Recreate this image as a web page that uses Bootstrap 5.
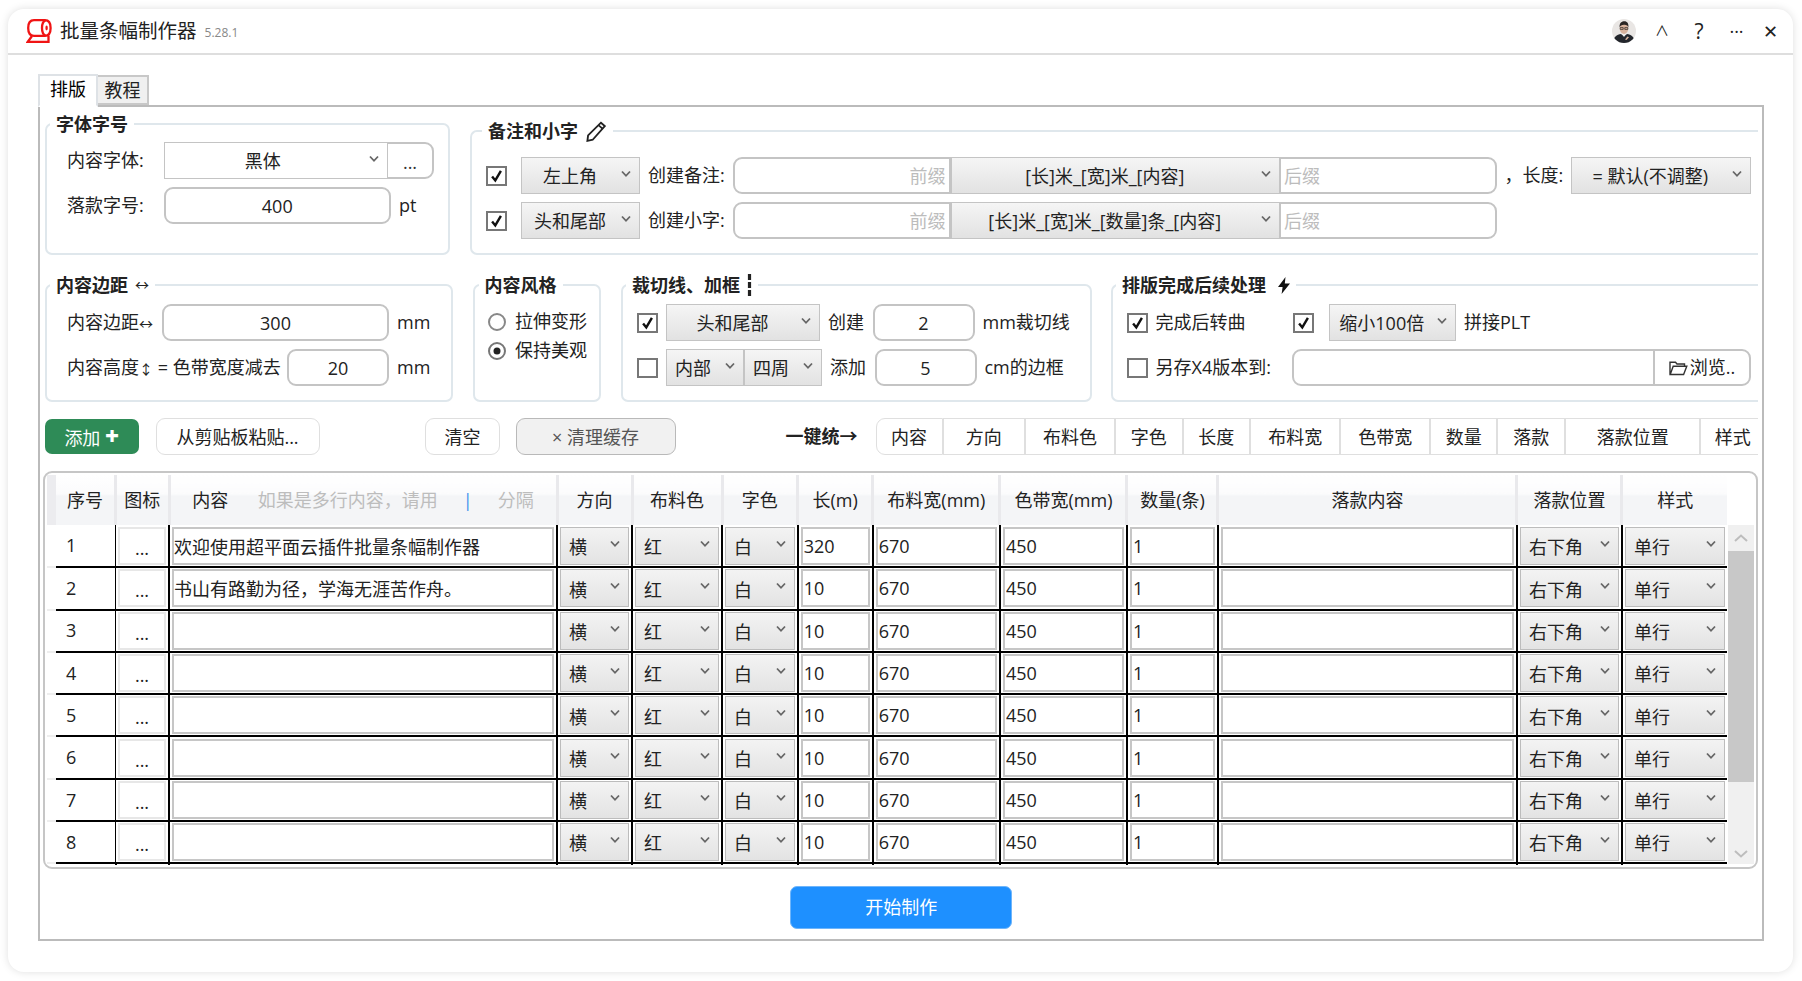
<!DOCTYPE html>
<html lang="zh-CN">
<head>
<meta charset="utf-8">
<title>批量条幅制作器</title>
<link href="https://cdn.jsdelivr.net/npm/bootstrap@5.3.0/dist/css/bootstrap.min.css" rel="stylesheet">
<style>
:root{--chev:url("data:image/svg+xml,%3Csvg xmlns='http://www.w3.org/2000/svg' viewBox='0 0 10 8'%3E%3Cpath d='M1 1.5 5 5.8 9 1.5' fill='none' stroke='%23666' stroke-width='1.8'/%3E%3C/svg%3E");}
html,body{height:100%;}
body{background:#fff;color:#222;font-family:"Open Sans","Noto Sans CJK SC",sans-serif;font-size:18px;line-height:1.25;overflow:hidden;}
.win{margin:9px 9px 9px 8px;height:963px;background:#fff;border-radius:16px;box-shadow:0 0 9px rgba(0,0,0,.13);}
.tbar{height:46px;border-bottom:2px solid #dedede;padding:0 6px 0 18px;}
.ttl{font-size:19.5px;margin-left:8px;}
.ver{font-size:12px;color:#888;margin-left:8px;padding-top:2px;}
.tico{width:26px;height:24px;flex:none;}
.avatar{width:24px;height:24px;flex:none;margin-right:10px;}
.tact span{text-align:center;}
.tb-up{width:32px;font-size:14px;}
.tb-q{width:42px;font-size:21px;}
.tb-m{width:33px;}
.tb-x{width:34px;}
.body-wrap{padding:19px 29px 0 30px;}
.tabs{border:0;margin:0;align-items:flex-end;position:relative;z-index:2;}
.tabs .nav-link{color:#222;font-size:18px;line-height:27px;padding:0;white-space:nowrap;border:2px solid #bbb;border-radius:0;background:#fff;height:33px;margin:0 0 -2px;width:60px;text-align:center;}
.tabs .nav-item+.nav-item .nav-link{background:#f0f0f0;width:51px;height:30px;margin:0;border-left:0;border-color:#c8c8c8;line-height:26px;}
.panel{border:2px solid #bbb;height:836px;padding:3px 4px 0 5px;background:#fff;}
.grp{border:2px solid #dfe7ec;border-radius:7px;padding:0;margin:0;min-width:0;}
.grp legend{float:none;width:auto;font-size:18px;font-weight:700;line-height:28px;margin:0;padding:0 6px;display:flex;align-items:center;gap:7px;}
.opn{border-right:0;border-top-right-radius:0;border-bottom-right-radius:0;}
.g1{width:405px;height:144.5px;padding:4px 0 0 20px;}
.g1 legend{margin-left:-17px;}
.g2{width:1288.5px;height:137.5px;margin:7px 0 0 19.5px;padding:12px 0 0 14px;}
.g2 legend{margin-left:-3.5px;}
.row2{margin-top:16.5px;}
.g3,.g4,.g5,.g6{height:131px;}
.g3{width:408px;padding:5px 0 0 20px;}
.g3 legend{margin-left:-17px;}
.g4{width:128.5px;margin-left:19.5px;padding:8px 0 0 13.5px;}
.g4 legend{margin-left:-9.5px;}
.g5{width:471.5px;margin-left:19.5px;padding:5px 0 0 14.5px;}
.g5 legend{margin-left:-11px;}
.g6{width:647px;margin-left:19px;padding:5px 0 0 14px;}
.g6 legend{margin-left:-11px;gap:12px;}
.arr{font-size:14px;font-weight:400;}
.rw{height:37px;margin-bottom:8px;}
.form-control.inp,.form-select.sel{height:37px;min-height:37px;font-size:18px;line-height:1.25;color:#222;box-shadow:none;}
.form-control.inp{border:2px solid #c4c4c4;border-radius:9px;padding:0 3px;text-align:center;background:#fff;}
.form-control.inp::placeholder{color:#bcbcbc;opacity:1;}
.form-select.sel{border:1.5px solid #c4c4c4;border-radius:0;background-color:#eee;background-image:var(--chev),linear-gradient(#f5f5f5,#e2e2e2);background-repeat:no-repeat;background-position:right 8px top 12px,0 0;background-size:10px 8px,100% 100%;padding:2px 26px 0 5px;text-align:center;}
.form-select.sel.white{background-image:var(--chev);background-color:#fff;padding-right:31px;}
.input-group>.form-control.inp{border-radius:9px 0 0 9px;}
.input-group>.form-control.lastc{border-radius:0 9px 9px 0;margin-left:-1px;text-align:left;}
.input-group>.sel{margin-left:0!important;flex:none;border-radius:0;}
.input-group>.mid{border-left:1px solid #c4c4c4;}
.tr{text-align:right!important;}
.lab{white-space:nowrap;flex:none;}
.l975{width:96.5px;}.l95{width:95px;}.l220{width:220px;}
.w226{width:227.5px;flex:none;}.w227{width:227px;flex:none;}.w102{width:102px;flex:none;}
.gr270{width:271.5px;flex:none;}
.input-group>.s223{width:224.5px!important;flex:none!important;}
.b47{width:47px;border:2px solid #c4c4c4;border-left:1px solid #c4c4c4;border-radius:0 9px 9px 0;background:#fff;padding:0;font-size:18px;line-height:37px;height:37px;color:#333;}
.u{margin-left:8px;white-space:nowrap;}
.chk.form-check-input{width:21px;height:20px;margin:0;border:2px solid #777;border-radius:0;flex:none;background-color:#fff;box-shadow:none;}
.chk.form-check-input:checked{background-color:#fff;border-color:#777;background-image:url("data:image/svg+xml,%3Csvg xmlns='http://www.w3.org/2000/svg' viewBox='0 0 20 20'%3E%3Cpath d='M4.5 10.5 8.5 15.5 15.5 3.5' fill='none' stroke='%23111' stroke-width='3'/%3E%3C/svg%3E");background-size:100% 100%;}
.chk.form-check-input.cm{margin-right:6.5px;width:21px;}
.chk.form-check-input.mr75{margin-right:7.5px;}
.chk.form-check-input.gap47{margin-left:47px;margin-right:15px;}
.w119{width:119px;flex:none!important;}.w179{width:179.5px;flex:none!important;}.w154{width:154px;flex:none!important;}.w127{width:127.5px;flex:none!important;}
.input-group>.w78{width:78px!important;flex:none!important;text-align:left;padding-left:8px;}
.l76{width:76.5px;}.l58{width:58.5px;text-align:left;}.l36{width:36.5px;}.l90{width:90px;}.l119{width:119px;}
.ig763{width:766px;flex:none;}
.input-group>.i217{width:218px!important;flex:none!important;}
.input-group>.s329{width:329.5px!important;}
.ls58{margin-left:-2px;}
.ig156{width:156px;flex:none;}.ig459{width:459px;flex:none;margin-left:17.5px;}
.rad{height:29px;gap:9px;}
.rd.form-check-input{width:18px;height:18px;margin:0;border:2px solid #888;box-shadow:none;background-color:#fff;}
.rd.form-check-input:checked{background-color:#fff;border-color:#777;background-image:url("data:image/svg+xml,%3Csvg xmlns='http://www.w3.org/2000/svg' viewBox='0 0 18 18'%3E%3Ccircle cx='9' cy='9' r='4.5' fill='%23222'/%3E%3C/svg%3E");background-size:100% 100%;}
.brw{width:97px;flex:none;border:2px solid #c4c4c4;border-left:1px solid #c4c4c4;border-radius:0 9px 9px 0;background:#fff;height:37px;font-size:18px;padding:0;color:#222;display:flex;align-items:center;justify-content:center;gap:2px;}
.ig459 .form-control.inp{border-radius:9px 0 0 9px;}
.tools{margin-top:16px;height:37px;margin-left:-.5px;}
.tbtn.btn{font-size:18px;line-height:1.25;height:37px;padding:2px 0 0;color:#222;background:#fff;border:1.5px solid #dfdfdf;border-radius:9px;flex:none;}
.add.btn{width:94.5px;height:35px;margin-top:1px;padding:1px 0 0;background:#2e8b57;border:0;color:#fff;font-size:18px;line-height:1.25;border-radius:7px;margin-right:16.5px;flex:none;}
.add b{font-size:24px;line-height:1;font-weight:800;}
.pst{width:164px;margin-right:105.5px;}
.clr{width:75px;margin-right:15.5px;}
.cache.btn{width:160px;background:#f1f1f1;border-color:#b9b9b9;color:#555;}
.uni{margin-left:110px;margin-right:19px;font-weight:700;width:71px;white-space:nowrap;}
.ugrp{flex:none;height:37px;}
.ugrp .btn{font-size:18px;line-height:1.25;padding:2px 0 0;height:37px;color:#222;background:#fff;border:1.5px solid #dfdfdf;flex:none;margin-left:0!important;}
.ugrp .btn:first-child{border-radius:9px 0 0 9px;}
.ugrp .btn:last-child{border-radius:0;border-right:0;padding-left:6px;}
.u1{width:67px}.u2{width:82.6px}.u3{width:90px}.u4{width:67.5px}.u5{width:67.5px}.u6{width:90.2px}.u7{width:89.9px}.u8{width:67.1px}.u9{width:68px}.u10{width:135.1px}.u11{width:58px}
.frame{margin-top:16px;width:1714.5px;height:398px;border:2px solid #c6c6c6;border-radius:9px;padding:2px 0 0 1.5px;margin-left:-2px;background:#fff;overflow:hidden;}
.tblw{width:1680.5px;flex:none;}
table.tbl.table{table-layout:fixed;width:1680.5px;margin:0;border-collapse:collapse;}
.tbl.table>:not(caption)>*>*{padding:0;border:0;background:transparent;box-shadow:none;color:#222;vertical-align:middle;}
.tbl.table thead th{height:50px;font-weight:400;text-align:center;background:linear-gradient(#fff 0,#fbfbfc 38%,#f4f5f7 42%,#f4f5f7 100%);border-right:3px solid #e9e9ec;font-size:18px;}
.tbl.table thead th.hgut{background:#ececef;border-right:0;}
.tbl.table thead th.hlast{border-right:0;}
.tbl.table tbody td{height:42.3px;border-bottom:2px solid #000;border-left:2px solid #000;padding:1px 2px;}
.tbl.table tbody td.gut{border:0;border-bottom:2px solid #eee;padding:0;}
.tbl.table tbody td.num{border-left:0;padding-left:10px;}
.tbl.table tbody td.ico{border-left:1.5px solid #000;}
.tbl.table tbody tr.tick td{height:2px;border-bottom:0;padding:0;}
.tbl.table tbody tr.tick td.gut,.tbl.table tbody tr.tick td.num{border:0;}
.cc.form-control{height:38px;min-height:38px;border:2px solid #c6c6c6;border-radius:0;font-size:18px;line-height:1.25;padding:0 1px;color:#222;box-shadow:none;}
.cc.form-control.txt{padding:0;}
.cc.form-select{height:38px;min-height:38px;border:1.5px solid #bcbcbc;border-radius:0;font-size:18px;line-height:1.25;color:#222;box-shadow:none;padding:3px 20px 0 8px;background-color:#eee;background-image:var(--chev),linear-gradient(#f3f3f3,#e3e3e3);background-repeat:no-repeat;background-position:right 8px top 12px,0 0;background-size:10px 8px,100% 100%;}
.dots.btn{display:block;width:100%;height:38px;border:2px solid #e7e7e7;border-radius:0;background:#fff;padding:4px 0 0;font-size:18px;line-height:30px;color:#222;}
.c0{width:9.5px}.c1{width:59.5px}.c2{width:53.5px}.c3{width:388px}.c4{width:75px}.c5{width:90px}.c6{width:75.7px}.c7{width:75px}.c8{width:127.3px}.c9{width:127px}.c10{width:91px}.c11{width:299px}.c12{width:105px}.c13{width:105px}
.hint{color:#bdbdbd;}
.hbar{color:#3d93ee;margin:0 25px;}
.hc1{margin-right:29.5px;}
.sbar{width:26px;flex:none;margin:50px 0 0 1px;height:339px;background:#f0f0f0;}
.sup{height:26px;}
.sth{height:231px;background:#c8c8c8;}
.sdn{height:82px;padding-bottom:6px;}
.start.btn{display:block;width:222px;height:43px;margin:16.5px auto 0;background:#1e90ff;border:1.5px solid #6eb5fb;color:#fff;border-radius:7px;font-size:18px;padding:0;line-height:1.25;}
.startwrap{width:1712.5px;}
</style>
</head>
<body>
<div class="win d-flex flex-column">
  <div class="tbar d-flex align-items-center">
    <svg class="tico" viewBox="0 0 26 24" aria-hidden="true"><g fill="none" stroke="#f01414" stroke-width="2.3"><path d="M8 1.2H19C23 1.2 24.6 4.5 24.6 9 24.6 13.5 23 16.8 19 16.8H8C3.6 16.8 2.2 13 2.2 9 2.2 5 3.6 1.2 8 1.2Z"/><path d="M19.5 1.4C16.6 2.6 16 6 16 9S16.6 15.4 19.5 16.6"/><path d="M6 17 1.8 22.8H22.5V16.5"/></g><ellipse cx="20.6" cy="9" rx="1.2" ry="2.4" fill="#f01414"/></svg>
    <span class="ttl">批量条幅制作器</span><span class="ver">5.28.1</span>
    <div class="tact d-flex align-items-center ms-auto">
      <svg class="avatar" viewBox="0 0 24 24" aria-hidden="true"><defs><clipPath id="av"><circle cx="12" cy="12" r="12"/></clipPath></defs><g clip-path="url(#av)"><rect width="24" height="24" fill="#e9e6e4"/><path d="M1 24C1 18 5 15.6 9 15L12 17.5 15 15C19 15.6 23 18 23 24Z" fill="#23262c"/><path d="M10 14 12 18 14 14Z" fill="#eee"/><ellipse cx="12" cy="9.5" rx="4.2" ry="5.4" fill="#d8b29c"/><path d="M7.6 8.5C7.2 3.5 10 2.2 12.4 2.2 15.2 2.2 16.8 4.4 16.4 8.5 15.8 6.4 14.6 5.6 12 5.7 9.6 5.7 8.2 6.5 7.6 8.5Z" fill="#2a2624"/><path d="M8.2 8.6H11.2V10.4H8.2ZM12.8 8.6H15.8V10.4H12.8Z" fill="none" stroke="#2a2624" stroke-width=".7"/><path d="M13 20.5 15.5 17.5 17 18.2 14.5 21Z" fill="#d8b29c"/></g></svg>
      <span class="tb-up">∧</span><span class="tb-q">?</span><span class="tb-m">···</span><span class="tb-x">✕</span>
    </div>
  </div>
  <div class="body-wrap">
    <ul class="nav nav-tabs tabs">
      <li class="nav-item"><a class="nav-link active" href="#">排版</a></li>
      <li class="nav-item"><a class="nav-link" href="#">教程</a></li>
    </ul>
    <div class="panel">
      <div class="d-flex align-items-start">
        <fieldset class="grp g1">
          <legend>字体字号</legend>
          <div class="d-flex align-items-center rw">
            <span class="lab l975">内容字体:</span>
            <div class="input-group gr270">
              <select class="form-select sel white s223"><option>黑体</option></select>
              <button class="b47" type="button">...</button>
            </div>
          </div>
          <div class="d-flex align-items-center rw">
            <span class="lab l975">落款字号:</span>
            <input class="form-control inp w226" value="400">
            <span class="u">pt</span>
          </div>
        </fieldset>
        <fieldset class="grp g2 opn">
          <legend>备注和小字
            <svg width="22" height="21" viewBox="0 0 20 19" aria-hidden="true"><path d="M14.5 1.5 18 4.5 7 17 2.2 18 2.8 13Z" fill="none" stroke="#222" stroke-width="1.7"/><path d="M12.5 4 16 7" stroke="#222" stroke-width="1.5"/></svg>
          </legend>
          <div class="d-flex align-items-center gap-2 rw">
            <input class="form-check-input chk cm" type="checkbox" checked>
            <select class="form-select sel w119"><option>左上角</option></select>
            <span class="lab l76">创建备注:</span>
            <div class="input-group ig763">
              <input class="form-control inp tr i217" placeholder="前缀">
              <select class="form-select sel s329 mid"><option>[长]米_[宽]米_[内容]</option></select>
              <input class="form-control inp lastc i217" placeholder="后缀">
            </div>
            <span class="lab l58 ls58">，长度:</span>
            <select class="form-select sel w179"><option>= 默认(不调整)</option></select>
          </div>
          <div class="d-flex align-items-center gap-2 rw">
            <input class="form-check-input chk cm" type="checkbox" checked>
            <select class="form-select sel w119"><option>头和尾部</option></select>
            <span class="lab l76">创建小字:</span>
            <div class="input-group ig763">
              <input class="form-control inp tr i217" placeholder="前缀">
              <select class="form-select sel s329 mid"><option>[长]米_[宽]米_[数量]条_[内容]</option></select>
              <input class="form-control inp lastc i217" placeholder="后缀">
            </div>
          </div>
        </fieldset>
      </div>
      <div class="d-flex align-items-start row2">
        <fieldset class="grp g3">
          <legend>内容边距 <span class="arr">↔</span></legend>
          <div class="d-flex align-items-center rw">
            <span class="lab l95">内容边距<span class="arr">↔</span></span>
            <input class="form-control inp w227" value="300">
            <span class="u">mm</span>
          </div>
          <div class="d-flex align-items-center rw">
            <span class="lab l220">内容高度<span class="arr">↕</span> = 色带宽度减去</span>
            <input class="form-control inp w102" value="20">
            <span class="u">mm</span>
          </div>
        </fieldset>
        <fieldset class="grp g4">
          <legend>内容风格</legend>
          <div class="d-flex align-items-center rad">
            <input class="form-check-input rd" type="radio" name="fg"><span class="lab">拉伸变形</span>
          </div>
          <div class="d-flex align-items-center rad">
            <input class="form-check-input rd" type="radio" name="fg" checked><span class="lab">保持美观</span>
          </div>
        </fieldset>
        <fieldset class="grp g5">
          <legend>裁切线、加框
            <svg width="5" height="22" viewBox="0 0 5 22" aria-hidden="true"><path d="M2.5 0V6M2.5 8V14M2.5 16V22" stroke="#222" stroke-width="3.2"/></svg>
          </legend>
          <div class="d-flex align-items-center gap-2 rw">
            <input class="form-check-input chk" type="checkbox" checked>
            <select class="form-select sel w154"><option>头和尾部</option></select>
            <span class="lab l36">创建</span>
            <input class="form-control inp w102" value="2">
            <span class="lab">mm裁切线</span>
          </div>
          <div class="d-flex align-items-center gap-2 rw">
            <input class="form-check-input chk" type="checkbox">
            <div class="input-group ig156">
              <select class="form-select sel w78"><option>内部</option></select>
              <select class="form-select sel w78"><option>四周</option></select>
            </div>
            <span class="lab l36">添加</span>
            <input class="form-control inp w102" value="5">
            <span class="lab">cm的边框</span>
          </div>
        </fieldset>
        <fieldset class="grp g6 opn">
          <legend>排版完成后续处理
            <svg width="12" height="17" viewBox="0 0 12 17" aria-hidden="true"><path d="M7.5 0 0 10H4.6L3.6 17 12 6.5H6.8Z" fill="#111"/></svg>
          </legend>
          <div class="d-flex align-items-center rw">
            <input class="form-check-input chk mr75" type="checkbox" checked>
            <span class="lab l90">完成后转曲</span>
            <input class="form-check-input chk gap47" type="checkbox" checked>
            <select class="form-select sel w127"><option>缩小100倍</option></select>
            <span class="u">拼接PLT</span>
          </div>
          <div class="d-flex align-items-center rw">
            <input class="form-check-input chk mr75" type="checkbox">
            <span class="lab l119">另存X4版本到:</span>
            <div class="input-group ig459">
              <input class="form-control inp">
              <button class="brw" type="button"><svg width="19" height="16" viewBox="0 0 19 16" aria-hidden="true"><path d="M1 14.5V2.2H6.5L8 4H15.5V6.2M1.2 14.5H14.6L17.8 6.2H4.2Z" fill="none" stroke="#333" stroke-width="1.4"/></svg>浏览..</button>
            </div>
          </div>
        </fieldset>
      </div>
      <div class="tools d-flex align-items-start">
        <button class="btn add" type="button">添加 <b>+</b></button>
        <button class="btn tbtn pst" type="button">从剪贴板粘贴...</button>
        <button class="btn tbtn clr" type="button">清空</button>
        <button class="btn tbtn cache" type="button">× 清理缓存</button>
        <span class="uni align-self-center">一键统→</span>
        <div class="btn-group ugrp" role="group">
          <button class="btn u1" type="button">内容</button><button class="btn u2" type="button">方向</button><button class="btn u3" type="button">布料色</button><button class="btn u4" type="button">字色</button><button class="btn u5" type="button">长度</button><button class="btn u6" type="button">布料宽</button><button class="btn u7" type="button">色带宽</button><button class="btn u8" type="button">数量</button><button class="btn u9" type="button">落款</button><button class="btn u10" type="button">落款位置</button><button class="btn u11" type="button">样式</button>
        </div>
      </div>
      <div class="frame d-flex align-items-start">
        <div class="tblw">
          <table class="table tbl">
            <colgroup><col class="c0"><col class="c1"><col class="c2"><col class="c3"><col class="c4"><col class="c5"><col class="c6"><col class="c7"><col class="c8"><col class="c9"><col class="c10"><col class="c11"><col class="c12"><col class="c13"></colgroup>
            <thead><tr>
              <th class="hgut"></th><th>序号</th><th>图标</th>
              <th><span class="hc1">内容</span><span class="hint">如果是多行内容，请用</span><span class="hbar">|</span><span class="hint">分隔</span></th>
              <th>方向</th><th>布料色</th><th>字色</th><th>长(m)</th><th>布料宽(mm)</th><th>色带宽(mm)</th><th>数量(条)</th><th>落款内容</th><th>落款位置</th><th class="hlast">样式</th>
            </tr></thead>
            <tbody id="rows"></tbody>
          </table>
        </div>
        <div class="sbar d-flex flex-column">
          <div class="sup d-flex align-items-center justify-content-center"><svg width="14" height="8" viewBox="0 0 14 8" aria-hidden="true"><path d="M1 7 7 1.5 13 7" fill="none" stroke="#bdbdbd" stroke-width="2"/></svg></div>
          <div class="sth"></div>
          <div class="sdn d-flex align-items-end justify-content-center"><svg width="14" height="8" viewBox="0 0 14 8" aria-hidden="true"><path d="M1 1 7 6.5 13 1" fill="none" stroke="#bdbdbd" stroke-width="2"/></svg></div>
        </div>
      </div>
      <div class="startwrap"><button class="btn start" type="button">开始制作</button></div>
    </div>
  </div>
</div>
<script src="https://cdn.jsdelivr.net/npm/bootstrap@5.3.0/dist/js/bootstrap.bundle.min.js"></script>
<script>
var texts=["欢迎使用超平面云插件批量条幅制作器","书山有路勤为径，学海无涯苦作舟。","","","","","",""];
var lens=["320","10","10","10","10","10","10","10"];
var h="";
function sel(t){return '<td><select class="form-select cc"><option>'+t+'</option></select></td>';}
function inp(v,c){return '<td><input class="form-control cc '+(c||"")+'" value="'+v+'"></td>';}
for(var i=0;i<8;i++){
  h+='<tr><td class="gut"></td><td class="num">'+(i+1)+'</td><td class="ico"><button class="btn dots" type="button">...</button></td>'+inp(texts[i],"txt")+sel("横")+sel("红")+sel("白")+inp(lens[i])+inp("670")+inp("450")+inp("1")+inp("")+sel("右下角")+sel("单行")+'</tr>';
}
h+='<tr class="tick"><td class="gut"></td><td class="num"></td>';
for(var j=0;j<12;j++){h+='<td></td>';}
h+='</tr>';
document.getElementById("rows").innerHTML=h;
</script>
</body>
</html>
